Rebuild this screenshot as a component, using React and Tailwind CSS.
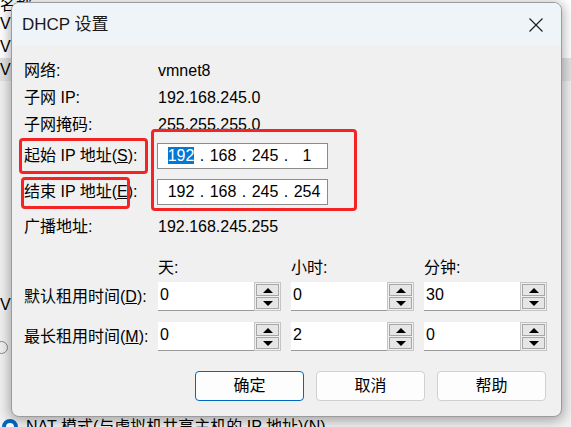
import React from "react";

const FONT = "font-['Liberation_Sans','Noto_Sans_CJK_SC',sans-serif]";

function Arrow({ up }) {
  return (
    <svg width="10" height="5" viewBox="0 0 10 5">
      <path d={up ? "M0 5 L5 0 L10 5 Z" : "M0 0 L5 5 L10 0 Z"} fill="#000" />
    </svg>
  );
}

function Spinner() {
  return (
    <div className="w-[27px] h-[29px] border border-[#c4c4c4] bg-[#f0f0f0] flex flex-col gap-[1px] p-[1px]">
      <div className="flex-1 border border-[#a6a6a6] bg-[#e6e6e6] flex items-center justify-center">
        <Arrow up />
      </div>
      <div className="flex-1 border border-[#a6a6a6] bg-[#e6e6e6] flex items-center justify-center">
        <Arrow />
      </div>
    </div>
  );
}

function LeaseField({ value }) {
  return (
    <div className="flex">
      <div className="w-[96px] h-[29px] bg-white border-b border-[#9a9a9a] pl-[2px] pb-[2px] flex items-center">
        {value}
      </div>
      <Spinner />
    </div>
  );
}

function IpBox({ parts, selectFirst }) {
  return (
    <div className="w-[171px] h-[26px] bg-white border border-[#8c8c8c] flex items-center pl-[8px]">
      {parts.map((p, i) => (
        <React.Fragment key={i}>
          {i > 0 && <span className="w-[12px] text-center">.</span>}
          <span className="w-[30px] text-center">
            {i === 0 && selectFirst ? (
              <span className="bg-[#0078d7] text-white">{p}</span>
            ) : (
              p
            )}
          </span>
        </React.Fragment>
      ))}
    </div>
  );
}

function InfoRow({ label, value, className = "" }) {
  return (
    <div className={`h-[27px] flex items-center ${className}`}>
      <div className="w-[134px]">{label}</div>
      <div>{value}</div>
    </div>
  );
}

export default function App() {
  return (
    <div className={`relative w-[571px] h-[427px] overflow-hidden bg-[#f0f0f0] text-[16px] text-black ${FONT}`}>
      {/* window behind the dialog */}
      <div className="flex flex-col h-full">
        <div className="bg-white">
          <div className="h-[14px] flex items-end leading-[14px] -mt-[2px]">
            <span>名称</span>
          </div>
          <div className="h-[23px] flex items-center">VMnet0</div>
          <div className="h-[23px] flex items-center">VMnet1</div>
          <div className="h-[23px] flex items-center bg-[#e2e2e2]">VMnet8</div>
        </div>
        <div className="mt-[214px] h-[20px] flex items-center">VMnet 信息</div>
        <div className="mt-[22px] h-[20px] flex items-center -ml-[5px] gap-2 text-[#666]">
          <span className="w-[13px] h-[13px] rounded-full border border-[#888]" />
          桥接模式
        </div>
        <div className="mt-[60px] h-[20px] flex items-center gap-[8px] pl-[2px]">
          <span className="w-[16px] h-[16px] rounded-full border-[4px] border-[#0067c0] bg-white" />
          NAT 模式(与虚拟机共享主机的 IP 地址)(N)
        </div>
      </div>

      {/* DHCP dialog */}
      <div className="absolute left-[11px] top-[2px] w-[551px] h-[415px] rounded-[8px] border border-[#9c9c9c] bg-[#f0f0f0] shadow-[0_2px_12px_2px_rgba(0,0,0,0.3)] overflow-hidden flex flex-col">
        <div className="h-[43px] bg-[#eff4f9] flex items-center justify-between pl-[10px] pr-[18px]">
          <span className="text-[17px] text-[#1a1a1a]">DHCP 设置</span>
          <svg width="14" height="14" viewBox="0 0 14 14">
            <path d="M0.5 0.5 L13.5 13.5 M13.5 0.5 L0.5 13.5" stroke="#1a1a1a" strokeWidth="1.1" />
          </svg>
        </div>

        <div className="flex-1 flex flex-col pl-[12px] pt-[11px]">
          <InfoRow label="网络:" value="vmnet8" />
          <InfoRow label="子网 IP:" value="192.168.245.0" />
          <InfoRow label="子网掩码:" value="255.255.255.0" />

          <div className="mt-[5px] h-[26px] flex items-center">
            <div className="w-[133px]">
              起始 IP 地址(<span className="underline">S</span>):
            </div>
            <IpBox parts={["192", "168", "245", "1"]} selectFirst />
          </div>
          <div className="mt-[10px] h-[26px] flex items-center">
            <div className="w-[133px]">
              结束 IP 地址(<span className="underline">E</span>):
            </div>
            <IpBox parts={["192", "168", "245", "254"]} />
          </div>

          <InfoRow className="mt-[8px]" label="广播地址:" value="192.168.245.255" />

          <div className="mt-[20px] h-[16px] flex items-center">
            <div className="w-[134px]" />
            <div className="flex gap-[10px]">
              <div className="w-[123px]">天:</div>
              <div className="w-[123px]">小时:</div>
              <div className="w-[123px]">分钟:</div>
            </div>
          </div>

          <div className="mt-[6px] flex items-center">
            <div className="w-[134px]">
              默认租用时间(<span className="underline">D</span>):
            </div>
            <div className="flex gap-[10px]">
              <LeaseField value="0" />
              <LeaseField value="0" />
              <LeaseField value="30" />
            </div>
          </div>
          <div className="mt-[11px] flex items-center">
            <div className="w-[134px]">
              最长租用时间(<span className="underline">M</span>):
            </div>
            <div className="flex gap-[10px]">
              <LeaseField value="0" />
              <LeaseField value="2" />
              <LeaseField value="0" />
            </div>
          </div>

          <div className="mt-[20px] flex justify-end gap-[12px] pr-[15px]">
            <button className="w-[109px] h-[30px] rounded-[4px] border-[1.5px] border-[#0067c0] bg-[#fdfdfd]">确定</button>
            <button className="w-[109px] h-[30px] rounded-[4px] border border-[#d0d0d0] bg-[#fdfdfd]">取消</button>
            <button className="w-[109px] h-[30px] rounded-[4px] border border-[#d0d0d0] bg-[#fdfdfd]">帮助</button>
          </div>
        </div>
      </div>

      {/* red annotation boxes */}
      <div className="absolute left-[19px] top-[138px] w-[129px] h-[36px] border-[3px] border-[#f52424] rounded-[4px]" />
      <div className="absolute left-[21px] top-[177px] w-[109px] h-[32px] border-[3px] border-[#f52424] rounded-[4px]" />
      <div className="absolute left-[151px] top-[129px] w-[206px] h-[82px] border-[3px] border-[#f52424] rounded-[4px]" />
    </div>
  );
}
